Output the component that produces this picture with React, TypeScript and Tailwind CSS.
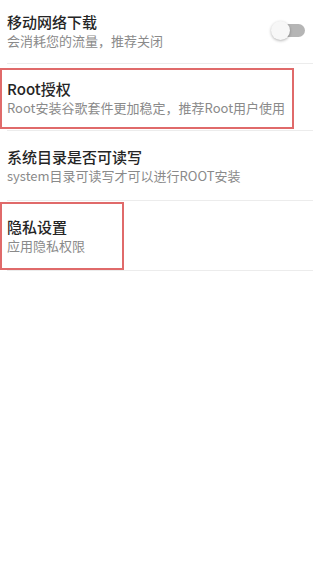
const font = { fontFamily: '"Noto Sans CJK SC", "Noto Sans", sans-serif' };

const rows = [
  { title: '移动网络下载', sub: '会消耗您的流量，推荐关闭', toggle: true, h: 'h-[64px] pb-[2px]' },
  { title: 'Root授权', sub: 'Root安装谷歌套件更加稳定，推荐Root用户使用', h: 'h-[67px]' },
  { title: '系统目录是否可读写', sub: 'system目录可读写才可以进行ROOT安装', h: 'h-[70px]' },
  { title: '隐私设置', sub: '应用隐私权限', h: 'h-[70px]' },
];

function Toggle() {
  return (
    <div className="relative h-[19px] w-[34px]">
      <div className="absolute right-0 top-[3px] h-[13px] w-[24px] rounded-full bg-[#b5b5b5]" />
      <div className="absolute left-0 top-0 h-[19px] w-[19px] rounded-full bg-[#f7f7f7] shadow-[0_1px_3px_rgba(0,0,0,0.3)]" />
    </div>
  );
}

export default function App() {
  return (
    <div className="relative min-h-[567px] w-[320px] bg-white" style={font}>
      <div className="flex flex-col">
        {rows.map((r) => (
          <div
            key={r.title}
            className={`mx-[7px] flex items-center justify-between border-b border-[#ececec] ${r.h}`}
          >
            <div className="flex flex-col gap-[1px]">
              <div className="text-[15px] leading-[19px] font-medium text-[#252525]">{r.title}</div>
              <div className="text-[13px] leading-[17px] text-[#8a8a8a]">{r.sub}</div>
            </div>
            {r.toggle && (
              <div className="mr-[8px]">
                <Toggle />
              </div>
            )}
          </div>
        ))}
      </div>
      <div className="absolute left-0 top-[68px] h-[61px] w-[294px] border-2 border-[#e06a6a]" />
      <div className="absolute left-0 top-[202px] h-[68px] w-[124px] border-2 border-[#e06a6a]" />
    </div>
  );
}
